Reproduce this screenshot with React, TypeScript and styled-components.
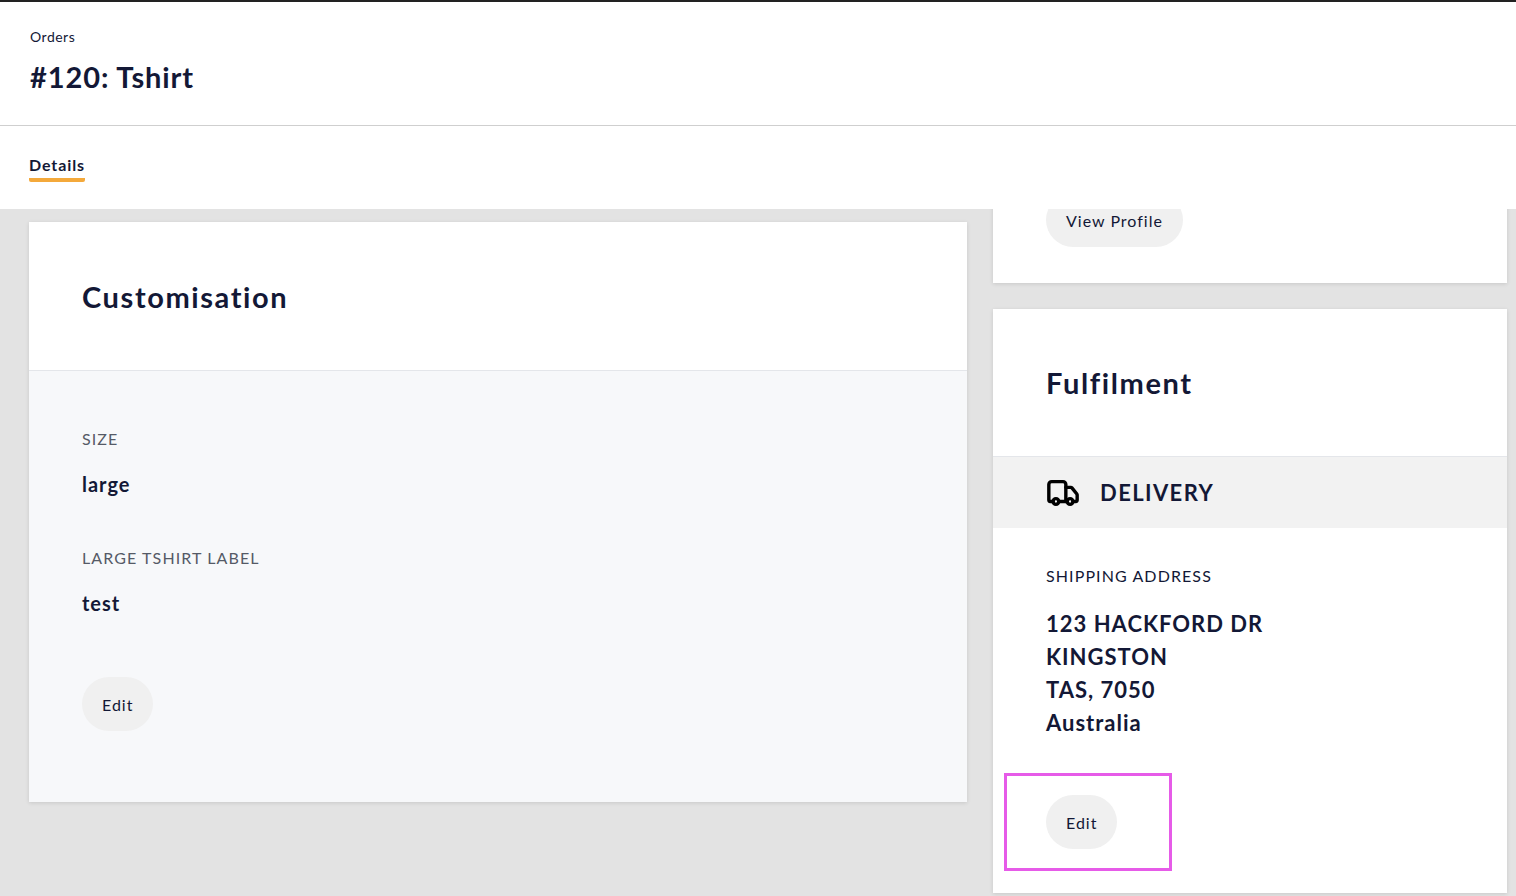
import styled, { createGlobalStyle } from "styled-components";
import { Truck } from "lucide-react";

const Global = createGlobalStyle`
  html, body { margin: 0; padding: 0; height: 100%; }
  body { font-family: "Lato", "Noto Sans", sans-serif; color: #131836; background: #e3e3e3; }
  #root { height: 100%; }
`

const Page = styled.div`
  height: 896px;
  display: flex;
  flex-direction: column;
  overflow: hidden;
  border-top: 2px solid #222;
  box-sizing: border-box;
`
const Header = styled.header`
  background: #fff;
  padding: 26px 30px 31px;
  border-bottom: 1px solid #cfcfcf;
  position: relative;
  z-index: 2;
`
const Crumb = styled.div`
  font-size: 14px;
  letter-spacing: 0.5px;
`
const Title = styled.h1`
  margin: 14px 0 0;
  font-size: 29px;
  font-weight: 700;
  letter-spacing: 0.9px;
`
const Tabs = styled.nav`
  background: #fff;
  height: 83px;
  padding: 0 29px;
  display: flex;
  align-items: flex-start;
  position: relative;
  z-index: 2;
`
const Tab = styled.div`
  margin-top: 29px;
  font-size: 16px;
  font-weight: 700;
  letter-spacing: 0.9px;
  padding-bottom: 4px;
  border-bottom: 4px solid #f4a93b;
  border-radius: 0 0 2px 2px;
`
const Content = styled.main`
  flex: 1;
  display: grid;
  grid-template-columns: 938px 514px;
  column-gap: 26px;
  padding: 0 9px 0 29px;
  min-height: 0;
`
const Column = styled.div<{ $shift?: number }>`
  display: flex;
  flex-direction: column;
  gap: 26px;
  margin-top: ${p => p.$shift ?? 13}px;
`
const Card = styled.section`
  background: #fff;
  box-shadow: 0 1px 4px rgba(0,0,0,0.12);
`
const CardHead = styled.div<{ $h: number }>`
  height: ${p => p.$h}px;
  padding: 0 53px;
  display: flex;
  align-items: center;
  border-bottom: 1px solid #e4e6ea;
`
const CardTitle = styled.h2`
  margin: 0;
  font-size: 29px;
  font-weight: 700;
  letter-spacing: 1.6px;
`
const CardBody = styled.div<{ $bg?: string }>`
  background: ${p => p.$bg ?? "#fff"};
  padding: 58px 53px 71px;
`
const Label = styled.div`
  font-size: 16px;
  color: #555a66;
  letter-spacing: 1.1px;
  text-transform: uppercase;
`
const Value = styled.div`
  margin: 24px 0 52px;
  font-size: 20px;
  font-weight: 700;
  letter-spacing: 1px;
  &:last-of-type { margin-bottom: 62px; }
`
const Button = styled.button`
  font-family: inherit;
  font-size: 16px;
  letter-spacing: 1px;
  color: #131836;
  background: #f0f0f0;
  border: none;
  border-radius: 27px;
  height: 54px;
  padding: 0 20px;
`
const Band = styled.div`
  background: #f2f2f2;
  height: 71px;
  padding: 0 53px;
  display: flex;
  align-items: center;
  gap: 20px;
  font-size: 22px;
  font-weight: 700;
  letter-spacing: 1.4px;
`
const Address = styled.div`
  margin: 22px 0 34px;
  font-size: 22px;
  font-weight: 700;
  line-height: 33px;
  letter-spacing: 1px;
`
const Highlight = styled.div`
  margin-left: -42px;
  width: 168px;
  height: 98px;
  border: 3px solid #e65be8;
  display: flex;
  align-items: center;
  padding-left: 39px;
  box-sizing: border-box;
`

export default function App() {
  return (
    <>
      <Global />
      <Page>
        <Header>
          <Crumb>Orders</Crumb>
          <Title>#120: Tshirt</Title>
        </Header>
        <Tabs><Tab>Details</Tab></Tabs>
        <Content>
          <Column>
            <Card>
              <CardHead $h={148}><CardTitle>Customisation</CardTitle></CardHead>
              <CardBody $bg="#f7f8fa">
                <Label>Size</Label>
                <Value>large</Value>
                <Label>Large Tshirt label</Label>
                <Value>test</Value>
                <Button>Edit</Button>
              </CardBody>
            </Card>
          </Column>
          <Column $shift={-16}>
            <Card>
              <CardBody style={{ padding: "0 53px 36px" }}>
                <Button>View Profile</Button>
              </CardBody>
            </Card>
            <Card>
              <CardHead $h={147}><CardTitle>Fulfilment</CardTitle></CardHead>
              <Band><Truck size={34} strokeWidth={2.4} color="#000" />DELIVERY</Band>
              <CardBody style={{ padding: "38px 53px 22px" }}>
                <Label style={{ color: "#131836" }}>Shipping Address</Label>
                <Address>123 HACKFORD DR<br />KINGSTON<br />TAS, 7050<br />Australia</Address>
                <Highlight><Button>Edit</Button></Highlight>
              </CardBody>
            </Card>
          </Column>
        </Content>
      </Page>
    </>
  )
}
